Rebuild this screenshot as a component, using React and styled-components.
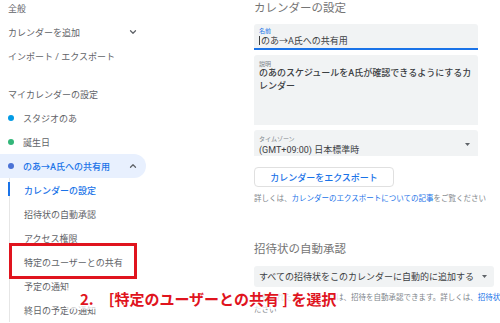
import React from 'react';
import styled, { createGlobalStyle } from 'styled-components';
import { ChevronDown, ChevronUp } from 'lucide-react';

const GlobalStyle = createGlobalStyle`
    html, body {
        margin: 0;
        padding: 0;
        background: #fff;
        overflow: hidden;
    }
    body {
        font-family: Roboto, "Noto Sans CJK JP", sans-serif;
        color: #5f6368;
    }
`;

const Page = styled.div`
    position: relative;
    display: flex;
    width: 700px;
    height: 323px;
    overflow: hidden;
`;

const Sidebar = styled.nav`
    width: 254px;
    flex-shrink: 0;
    display: flex;
    flex-direction: column;
    margin-top: -4px;
`;

const NavItem = styled.div`
    width: 146px;
    height: 24px;
    box-sizing: border-box;
    padding: 0 8px;
    display: flex;
    align-items: center;
    justify-content: space-between;
    font-size: 9px;
    color: #5f6368;
    margin-top: ${p => p.$gap || 0}px;
`;

const CalendarItem = styled.div`
    width: 146px;
    height: 24px;
    box-sizing: border-box;
    padding: 0 8px;
    display: flex;
    align-items: center;
    gap: 9px;
    font-size: 9px;
    color: ${p => (p.$active ? '#1a73e8' : '#5f6368')};
    font-weight: ${p => (p.$active ? 500 : 400)};
    background: ${p => (p.$active ? '#e8f0fe' : 'transparent')};
    border-radius: 0 12px 12px 0;
`;

const Dot = styled.span`
    width: 6px;
    height: 6px;
    border-radius: 50%;
    background: ${p => p.$color};
    flex-shrink: 0;
`;

const Grow = styled.span`
    flex: 1;
`;

const SubList = styled.div`
    margin-left: 9px;
    border-left: 1px solid #e6e6e6;
    display: flex;
    flex-direction: column;
`;

const SubItem = styled.div`
    position: relative;
    height: 24px;
    width: 137px;
    box-sizing: border-box;
    padding-left: 14px;
    display: flex;
    align-items: center;
    font-size: 9px;
    color: ${p => (p.$active ? '#1a73e8' : '#5f6368')};
    font-weight: ${p => (p.$active ? 500 : 400)};

    &::before {
        content: '';
        display: ${p => (p.$active ? 'block' : 'none')};
        position: absolute;
        left: -2px;
        top: 4px;
        width: 2px;
        height: 14px;
        background: #1a73e8;
    }
`;

const Highlight = styled.span`
    position: absolute;
    left: -1px;
    top: -7px;
    bottom: -5px;
    width: 128px;
    border: 3px solid #e0141e;
    box-sizing: border-box;
`;

const Main = styled.main`
    display: flex;
    flex-direction: column;
    align-items: flex-start;
    width: 420px;
`;

const Heading = styled.h2`
    margin: ${p => p.$top}px 0 0;
    font-size: 11.5px;
    line-height: 14px;
    font-weight: 400;
    color: #757575;
`;

const Field = styled.div`
    width: 224px;
    box-sizing: border-box;
    background: #f1f3f4;
    border-radius: 3px 3px 0 0;
    padding: ${p => p.$pt || 3}px 3px 0 5px;
    margin-top: ${p => p.$top}px;
    height: ${p => p.$h}px;
    border-bottom: ${p => (p.$focused ? '2px solid #1a73e8' : 'none')};
    display: flex;
    align-items: flex-start;
`;

const FieldBody = styled.div`
    flex: 1;
    display: flex;
    flex-direction: column;
`;

const Label = styled.span`
    font-size: 6px;
    line-height: 7px;
    color: ${p => (p.$focused ? '#1a73e8' : '#80868b')};
`;

const Value = styled.span`
    font-size: 9px;
    line-height: ${p => p.$lh || 11}px;
    margin-top: ${p => p.$top || 0}px;
    color: #3c4043;
    font-weight: ${p => p.$weight || 400};
`;

const Caret = styled.span`
    display: inline-block;
    width: 1px;
    height: 9px;
    background: #3c4043;
    vertical-align: -1px;
    margin-right: 1px;
`;

const Arrow = styled.svg`
    width: 5px;
    height: 3px;
    flex-shrink: 0;
    margin: ${p => p.$margin};
`;

const Button = styled.button`
    margin-top: 11px;
    width: 140px;
    height: 20px;
    background: #fff;
    border: 1px solid #e0e0e0;
    border-radius: 4px;
    font-family: Roboto, "Noto Sans CJK JP", sans-serif;
    font-size: 9px;
    font-weight: 500;
    color: #1a73e8;
    padding: 0;
`;

const Help = styled.p`
    margin: ${p => p.$top}px 0 0;
    font-size: 7.5px;
    line-height: 12px;
    color: #80868b;
    width: ${p => p.$width || 'auto'};
    white-space: ${p => (p.$width ? 'normal' : 'nowrap')};
`;

const Link = styled.span`
    color: #1a73e8;
`;

const Select = styled.div`
    margin-top: 10px;
    height: 21px;
    display: inline-flex;
    align-items: center;
    gap: 8px;
    padding: 0 7px 0 5px;
    background: #f1f3f4;
    border-radius: 3px;
    font-size: 9px;
    color: #3c4043;
`;

const Annotation = styled.div`
    position: absolute;
    left: 66px;
    top: 288px;
    height: 21px;
    padding: 0 4px 0 14px;
    background: rgba(255, 255, 255, 0.72);
    font-family: "Noto Sans CJK JP", sans-serif;
    font-size: 15px;
    line-height: 21px;
    font-weight: 700;
    color: #e0141e;
    white-space: pre;
`;

function DropArrow({ margin }) {
    return (
        <Arrow viewBox="0 0 5 3" $margin={margin}>
            <path d="M0 0 L5 0 L2.5 3 Z" fill="#5f6368" />
        </Arrow>
    );
}

export default function App() {
    return (
        <>
            <GlobalStyle />
            <Page>
                <Sidebar>
                    <NavItem>全般</NavItem>
                    <NavItem>
                        カレンダーを追加
                        <ChevronDown size={10} strokeWidth={3} color="#5f6368" />
                    </NavItem>
                    <NavItem>インポート / エクスポート</NavItem>
                    <NavItem $gap={14}>マイカレンダーの設定</NavItem>
                    <CalendarItem>
                        <Dot $color="#039be5" />
                        スタジオのあ
                    </CalendarItem>
                    <CalendarItem>
                        <Dot $color="#33b679" />
                        誕生日
                    </CalendarItem>
                    <CalendarItem $active>
                        <Dot $color="#4a72d6" />
                        <Grow>のあ→A氏への共有用</Grow>
                        <ChevronUp size={10} strokeWidth={3} color="#5f6368" />
                    </CalendarItem>
                    <SubList>
                        <SubItem $active>カレンダーの設定</SubItem>
                        <SubItem>招待状の自動承認</SubItem>
                        <SubItem>アクセス権限</SubItem>
                        <SubItem>
                            特定のユーザーとの共有
                            <Highlight />
                        </SubItem>
                        <SubItem>予定の通知</SubItem>
                        <SubItem>終日の予定の通知</SubItem>
                    </SubList>
                </Sidebar>

                <Main>
                    <Heading $top={1}>カレンダーの設定</Heading>

                    <Field $top={9} $h={26} $focused>
                        <FieldBody>
                            <Label $focused>名前</Label>
                            <Value $top={2}>
                                <Caret />
                                のあ→A氏への共有用
                            </Value>
                        </FieldBody>
                    </Field>

                    <Field $top={5} $h={70} $pt={5}>
                        <FieldBody>
                            <Label>説明</Label>
                            <Value $lh={13} $weight={500}>
                                のあのスケジュールをA氏が確認できるようにするカレンダー
                            </Value>
                        </FieldBody>
                    </Field>

                    <Field $top={5} $h={26} $pt={5}>
                        <FieldBody>
                            <Label>タイムゾーン</Label>
                            <Value $top={3}>(GMT+09:00) 日本標準時</Value>
                        </FieldBody>
                        <DropArrow margin="8px 5px 0 0" />
                    </Field>

                    <Button>カレンダーをエクスポート</Button>
                    <Help $top={6}>
                        詳しくは、<Link>カレンダーのエクスポートについての記事</Link>をご覧ください
                    </Help>

                    <Heading $top={37}>招待状の自動承認</Heading>
                    <Select>
                        すべての招待状をこのカレンダーに自動的に追加する
                        <DropArrow margin="0" />
                    </Select>
                    <Help $top={5} $width="48em">
                        共有されたカレンダーでは、招待を自動承認できます。詳しくは、<Link>招待状の自動承認に関する記事</Link>をご覧ください
                    </Help>
                </Main>

                <Annotation>{'2.　[特定のユーザーとの共有 ] を選択'}</Annotation>
            </Page>
        </>
    );
}
